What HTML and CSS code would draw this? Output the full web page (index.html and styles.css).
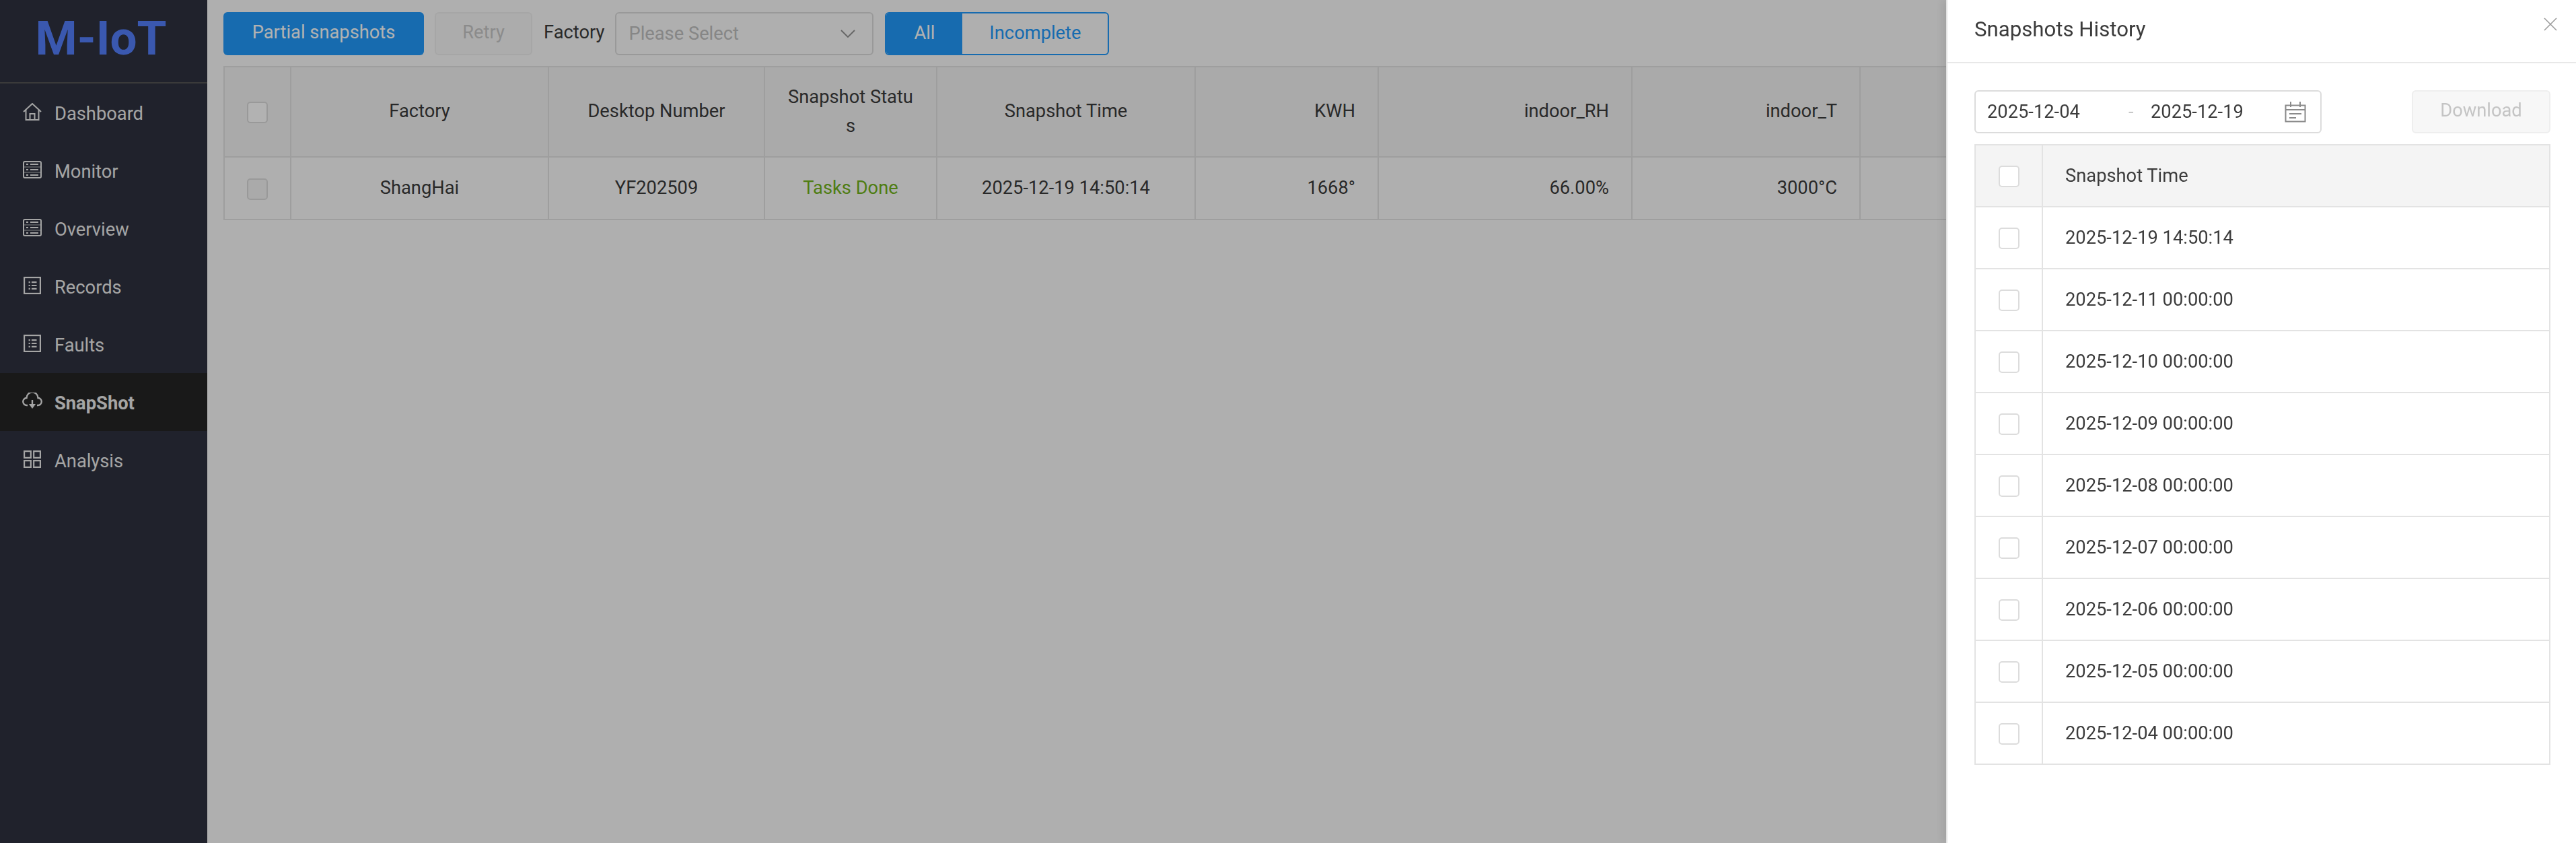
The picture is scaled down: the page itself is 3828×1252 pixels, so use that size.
FILE: index.html
```html
<!DOCTYPE html>
<html lang="en">
<head>
  <meta charset="UTF-8" />
  <title>M-IoT SnapShot</title>
  <link rel="stylesheet" href="styles.css">
</head>
<body>
  <svg class="defs" width="0" height="0">
    <symbol id="i-home" viewBox="0 0 28 26">
      <path d="M1 13 14 1l13 12M4.500 10.500V25h19V10.500M10.500 25v-9h7v9" fill="none" stroke="currentColor" stroke-width="2"/>
    </symbol>
    <symbol id="i-table" viewBox="0 0 28 26">
      <rect x="1" y="1" width="26" height="24" rx="2" fill="none" stroke="currentColor" stroke-width="2"/>
      <path d="M2 9h24M2 17h24" fill="none" stroke="currentColor" stroke-width="1.500" opacity=".5"/>
      <path d="M5 5h3M11 5h12M5 13h3M11 13h12M5 21h3M11 21h12" fill="none" stroke="currentColor" stroke-width="2"/>
    </symbol>
    <symbol id="i-list" viewBox="0 0 24 24">
      <rect x="1" y="1" width="22" height="22" fill="none" stroke="currentColor" stroke-width="2"/>
      <path d="M7 7.500h2M11 7.500h7M7 12h2M11 12h7M7 16.500h2M11 16.500h7" fill="none" stroke="currentColor" stroke-width="2"/>
    </symbol>
    <symbol id="i-cloud" viewBox="0 0 30 24">
      <path d="M8 18H7a5.500 5.500 0 0 1-.5-11A8.500 8.500 0 0 1 23.500 7 5.500 5.500 0 0 1 23 18h-1" fill="none" stroke="currentColor" stroke-width="2.400"/>
      <path d="M15 10v8" stroke="currentColor" stroke-width="2.400"/>
      <path d="M10 16h10l-5 7z" fill="currentColor"/>
    </symbol>
    <symbol id="i-grid" viewBox="0 0 24 24">
      <path d="M1 1h9v9H1zM14 1h9v9h-9zM1 14h9v9H1zM14 14h9v9h-9z" fill="none" stroke="currentColor" stroke-width="2"/>
    </symbol>
  </svg>

  <div class="app">
    <aside class="sidebar">
      <div class="logo">M-IoT</div>
      <nav class="menu">
        <a class="menu-item"><svg class="menu-icon"><use href="#i-home"/></svg>Dashboard</a>
        <a class="menu-item"><svg class="menu-icon"><use href="#i-table"/></svg>Monitor</a>
        <a class="menu-item"><svg class="menu-icon"><use href="#i-table"/></svg>Overview</a>
        <a class="menu-item"><svg class="menu-icon"><use href="#i-list"/></svg>Records</a>
        <a class="menu-item"><svg class="menu-icon"><use href="#i-list"/></svg>Faults</a>
        <a class="menu-item active"><svg class="menu-icon"><use href="#i-cloud"/></svg>SnapShot</a>
        <a class="menu-item"><svg class="menu-icon"><use href="#i-grid"/></svg>Analysis</a>
      </nav>
    </aside>

    <main class="main">
      <div class="toolbar">
        <button class="btn btn-primary">Partial snapshots</button>
        <button class="btn btn-disabled">Retry</button>
        <span class="field-label">Factory</span>
        <div class="select">
          <span>Please Select</span>
          <svg class="chevron" viewBox="0 0 22 12"><path d="M1 1l10 10L21 1" fill="none" stroke="currentColor" stroke-width="1.800"/></svg>
        </div>
        <div class="tabs">
          <span class="tab tab-on">All</span>
          <span class="tab">Incomplete</span>
        </div>
      </div>

      <table class="grid main-grid">
        <colgroup>
          <col class="c-check"><col class="c-factory"><col class="c-desktop"><col class="c-status"><col class="c-time"><col class="c-kwh"><col class="c-rh"><col class="c-t"><col>
        </colgroup>
        <thead>
          <tr>
            <th><span class="check"></span></th>
            <th>Factory</th>
            <th>Desktop Number</th>
            <th>Snapshot Status</th>
            <th>Snapshot Time</th>
            <th class="num">KWH</th>
            <th class="num">indoor_RH</th>
            <th class="num">indoor_T</th>
            <th></th>
          </tr>
        </thead>
        <tbody>
          <tr>
            <td><span class="check check-off"></span></td>
            <td>ShangHai</td>
            <td>YF202509</td>
            <td class="done">Tasks Done</td>
            <td>2025-12-19 14:50:14</td>
            <td class="num">1668°</td>
            <td class="num">66.00%</td>
            <td class="num">3000°C</td>
            <td></td>
          </tr>
        </tbody>
      </table>
    </main>
  </div>

  <div class="overlay"></div>

  <section class="drawer">
    <header class="drawer-head">
      <h2>Snapshots History</h2>
      <svg class="close" viewBox="0 0 20 20"><path d="M1 1l18 18M19 1 1 19" fill="none" stroke="currentColor" stroke-width="1.600"/></svg>
    </header>
    <div class="drawer-body">
      <div class="filter">
        <div class="range">
          <span class="range-from">2025-12-04</span>
          <span class="range-sep">-</span>
          <span class="range-to">2025-12-19</span>
          <svg class="calendar" viewBox="0 0 32 32">
            <path d="M1.500 6.500h29v24h-29zM1.500 13h29M9 1v8M23 1v8M7 19h18M7 25h10" fill="none" stroke="currentColor" stroke-width="2"/>
          </svg>
        </div>
        <button class="btn btn-download">Download</button>
      </div>

      <table class="grid history-grid">
        <colgroup><col class="c-check2"><col></colgroup>
        <thead>
          <tr><th><span class="check"></span></th><th>Snapshot Time</th></tr>
        </thead>
        <tbody>
          <tr><td><span class="check"></span></td><td>2025-12-19 14:50:14</td></tr>
          <tr><td><span class="check"></span></td><td>2025-12-11 00:00:00</td></tr>
          <tr><td><span class="check"></span></td><td>2025-12-10 00:00:00</td></tr>
          <tr><td><span class="check"></span></td><td>2025-12-09 00:00:00</td></tr>
          <tr><td><span class="check"></span></td><td>2025-12-08 00:00:00</td></tr>
          <tr><td><span class="check"></span></td><td>2025-12-07 00:00:00</td></tr>
          <tr><td><span class="check"></span></td><td>2025-12-06 00:00:00</td></tr>
          <tr><td><span class="check"></span></td><td>2025-12-05 00:00:00</td></tr>
          <tr><td><span class="check"></span></td><td>2025-12-04 00:00:00</td></tr>
        </tbody>
      </table>
    </div>
  </section>
</body>
</html>
```

FILE: styles.css
```css
* {
  box-sizing: border-box;
}

html, body {
  height: 100%;
}

body {
  margin: 0;
  overflow: hidden;
  background: #fbfbfb;
  color: #3c3c3c;
  font-family: Roboto, "Noto Sans", sans-serif;
  font-size: 27.3px;
}

.defs {
  position: absolute;
}

.app {
  display: flex;
  height: 100%;
}

/* === Sidebar === */
.sidebar {
  flex: 0 0 308px;
  background: #2e323f;
  color: #ececec;
}

.logo {
  height: 124px;
  padding: 14px 8px 0 0;
  border-bottom: 2px solid #535353;
  color: #547ffb;
  font-size: 71px;
  font-weight: 700;
  line-height: 86px;
  text-align: center;
}

.menu-item {
  display: flex;
  align-items: center;
  height: 86px;
  padding-left: 33px;
  padding-top: 4px;
}

.menu-item.active {
  background: #242424;
  font-weight: 700;
}

.menu-icon {
  flex: 0 0 30px;
  width: 30px;
  height: 26px;
  margin-top: -6px;
  margin-right: 18px;
}

/* === Main === */
.main {
  flex: 1;
  min-width: 0;
  padding: 18px 0 0 24px;
  overflow: hidden;
}

.toolbar {
  display: flex;
  align-items: center;
  height: 64px;
}

.btn {
  height: 64px;
  padding: 0 0 4px;
  border: 2px solid transparent;
  border-radius: 6px;
  font: inherit;
}

.btn-primary {
  width: 298px;
  background: #219afb;
  color: #fff;
}

.btn-disabled {
  width: 145px;
  margin-left: 16px;
  border-color: #eeeeee;
  background: #f7f7f7;
  color: #c8c8c8;
}

.field-label {
  margin-left: 17px;
  padding-bottom: 4px;
}

.select {
  display: flex;
  align-items: center;
  justify-content: space-between;
  width: 384px;
  height: 64px;
  margin-left: 16px;
  padding: 0 25px 0 18px;
  border: 2px solid #dcdcdc;
  border-radius: 6px;
  color: #c0c0c0;
}

.chevron {
  width: 22px;
  height: 12px;
  color: #909090;
}

.tabs {
  display: flex;
  width: 333px;
  height: 64px;
  margin-left: 17px;
  border: 2px solid #219afb;
  border-radius: 6px;
  color: #219afb;
  overflow: hidden;
}

.tab {
  flex: 1;
  padding-bottom: 6px;
  line-height: 58px;
  text-align: center;
}

.tab-on {
  flex: 0 0 113px;
  background: #219afb;
  color: #fff;
}

/* === Tables === */
.grid {
  border-collapse: collapse;
  table-layout: fixed;
}

.grid th, .grid td {
  border: 2px solid #e3e3e3;
  font-weight: 400;
}

.grid th {
  background: #f4f4f4;
}

.main-grid {
  width: 3464px;
  margin-top: 16px;
}

.main-grid thead tr {
  height: 134px;
}

.main-grid tbody tr {
  height: 93px;
}

.main-grid th, .main-grid td {
  padding: 0 33px 1px;
  text-align: center;
  line-height: 43px;
  word-break: break-all;
}

.main-grid .num {
  text-align: right;
}

.c-check { width: 99px; }
.c-factory { width: 383px; }
.c-desktop { width: 321px; }
.c-status { width: 256px; }
.c-time { width: 384px; }
.c-kwh { width: 272px; }
.c-rh { width: 377px; }
.c-t { width: 339px; }

.done {
  color: #71b31a;
}

.check {
  display: block;
  width: 31px;
  height: 32px;
  margin: 3px auto 0;
  border: 2px solid #dcdcdc;
  border-radius: 5px;
  background: #fff;
}

.check-off {
  background: #f4f4f4;
}

/* === Drawer === */
.overlay {
  position: fixed;
  inset: 0;
  background: rgba(0, 0, 0, 0.3);
}

.drawer {
  position: fixed;
  top: 0;
  right: 0;
  bottom: 0;
  width: 936px;
  border-left: 2px solid #e3e3e3;
  background: #fff;
  box-shadow: -6px 0 12px rgba(0, 0, 0, 0.08);
}

.drawer-head {
  display: flex;
  align-items: center;
  justify-content: space-between;
  height: 94px;
  padding: 0 28px 6px 40px;
  border-bottom: 2px solid #e8e8e8;
}

.drawer-head h2 {
  margin: 0;
  font-size: 31.2px;
  font-weight: 400;
}

.close {
  width: 20px;
  height: 20px;
  margin-top: -14px;
  color: #9c9c9c;
}

.drawer-body {
  padding: 40px 38px 0 40px;
}

.filter {
  display: flex;
  justify-content: space-between;
}

.range {
  display: flex;
  align-items: center;
  width: 516px;
  height: 64px;
  padding-left: 17px;
  border: 2px solid #dcdcdc;
  border-radius: 6px;
}

.range-from {
  width: 210px;
}

.range-sep {
  width: 33px;
  color: #c8c8c8;
}

.range-to {
  width: 199px;
}

.calendar {
  width: 32px;
  height: 32px;
  color: #8a8a8a;
}

.btn-download {
  width: 206px;
  border-color: #eeeeee;
  background: #f7f7f7;
  color: #c4c4c4;
}

.history-grid {
  width: 856px;
  margin-top: 16px;
}

.history-grid tr {
  height: 92px;
}

.history-grid th, .history-grid td {
  padding: 0 32px 1px 33px;
  text-align: left;
}

.c-check2 {
  width: 100px;
}
```
